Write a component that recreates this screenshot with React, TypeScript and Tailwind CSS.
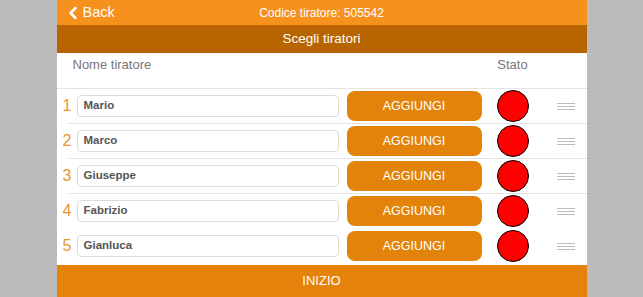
import { ChevronLeft } from 'lucide-react';

const shooters = ['Mario', 'Marco', 'Giuseppe', 'Fabrizio', 'Gianluca'];

const DragHandle = () => (
  <div className="flex w-[18px] flex-col gap-[2px]">
    <span className="h-px w-full bg-[#bcbcbc]" />
    <span className="h-px w-full bg-[#bcbcbc]" />
    <span className="h-px w-full bg-[#bcbcbc]" />
  </div>
);

const App = () => {
  return (
    <div className="flex h-[297px] w-full justify-center bg-[#bbbbbb] font-['Liberation_Sans',Arial,sans-serif]">
      <div className="flex w-[530px] flex-col bg-white">
        <header className="grid h-[25px] grid-cols-[1fr_auto_1fr] items-center bg-[#f6911e] text-white">
          <button type="button" className="flex items-center pl-[6px] text-[14.5px] leading-none">
            <ChevronLeft className="h-[20px] w-[20px]" strokeWidth={3} />
            <span>Back</span>
          </button>
          <span className="text-[12px]">Codice tiratore: 505542</span>
          <span />
        </header>

        <div className="flex h-[28px] items-center justify-center bg-[#b86400] text-[13.5px] text-white">
          Scegli tiratori
        </div>

        <div className="flex h-[36px] border-b border-[#e3e3e3] pt-[4px] text-[13px] leading-[16px] text-[#777777]">
          <span className="ml-[16px] w-[424px]">Nome tiratore</span>
          <span className="w-[32px] text-center">Stato</span>
        </div>

        <div className="flex flex-1 flex-col">
          {shooters.map((name, i) => (
            <div key={name} className="flex flex-col">
              <div className="flex h-[34px] items-center">
                <span className="w-[20px] pl-[1px] text-center text-[16px] text-[#e8962f]">
                  {i + 1}
                </span>
                <div className="flex h-[22px] w-[262px] items-center rounded-[4px] border border-[#dcdcdc] pl-[6px] text-[11.5px] font-bold text-[#555555]">
                  {name}
                </div>
                <button
                  type="button"
                  className="ml-[8px] flex h-[30px] w-[135px] items-center justify-center rounded-[8px] bg-[#e4830a] text-[12.5px] text-white"
                >
                  AGGIUNGI
                </button>
                <span className="ml-[15px] h-[32px] w-[32px] rounded-full border-[1.5px] border-black bg-[#ff0000]" />
                <div className="ml-[28px]">
                  <DragHandle />
                </div>
              </div>
              <div className={i < 3 ? 'ml-[11px] h-px bg-[#e3e3e3]' : 'h-px'} />
            </div>
          ))}
        </div>

        <button
          type="button"
          className="flex h-[32px] items-center justify-center bg-[#e4820a] text-[13px] text-white"
        >
          INIZIO
        </button>
      </div>
    </div>
  );
};

export default App;
